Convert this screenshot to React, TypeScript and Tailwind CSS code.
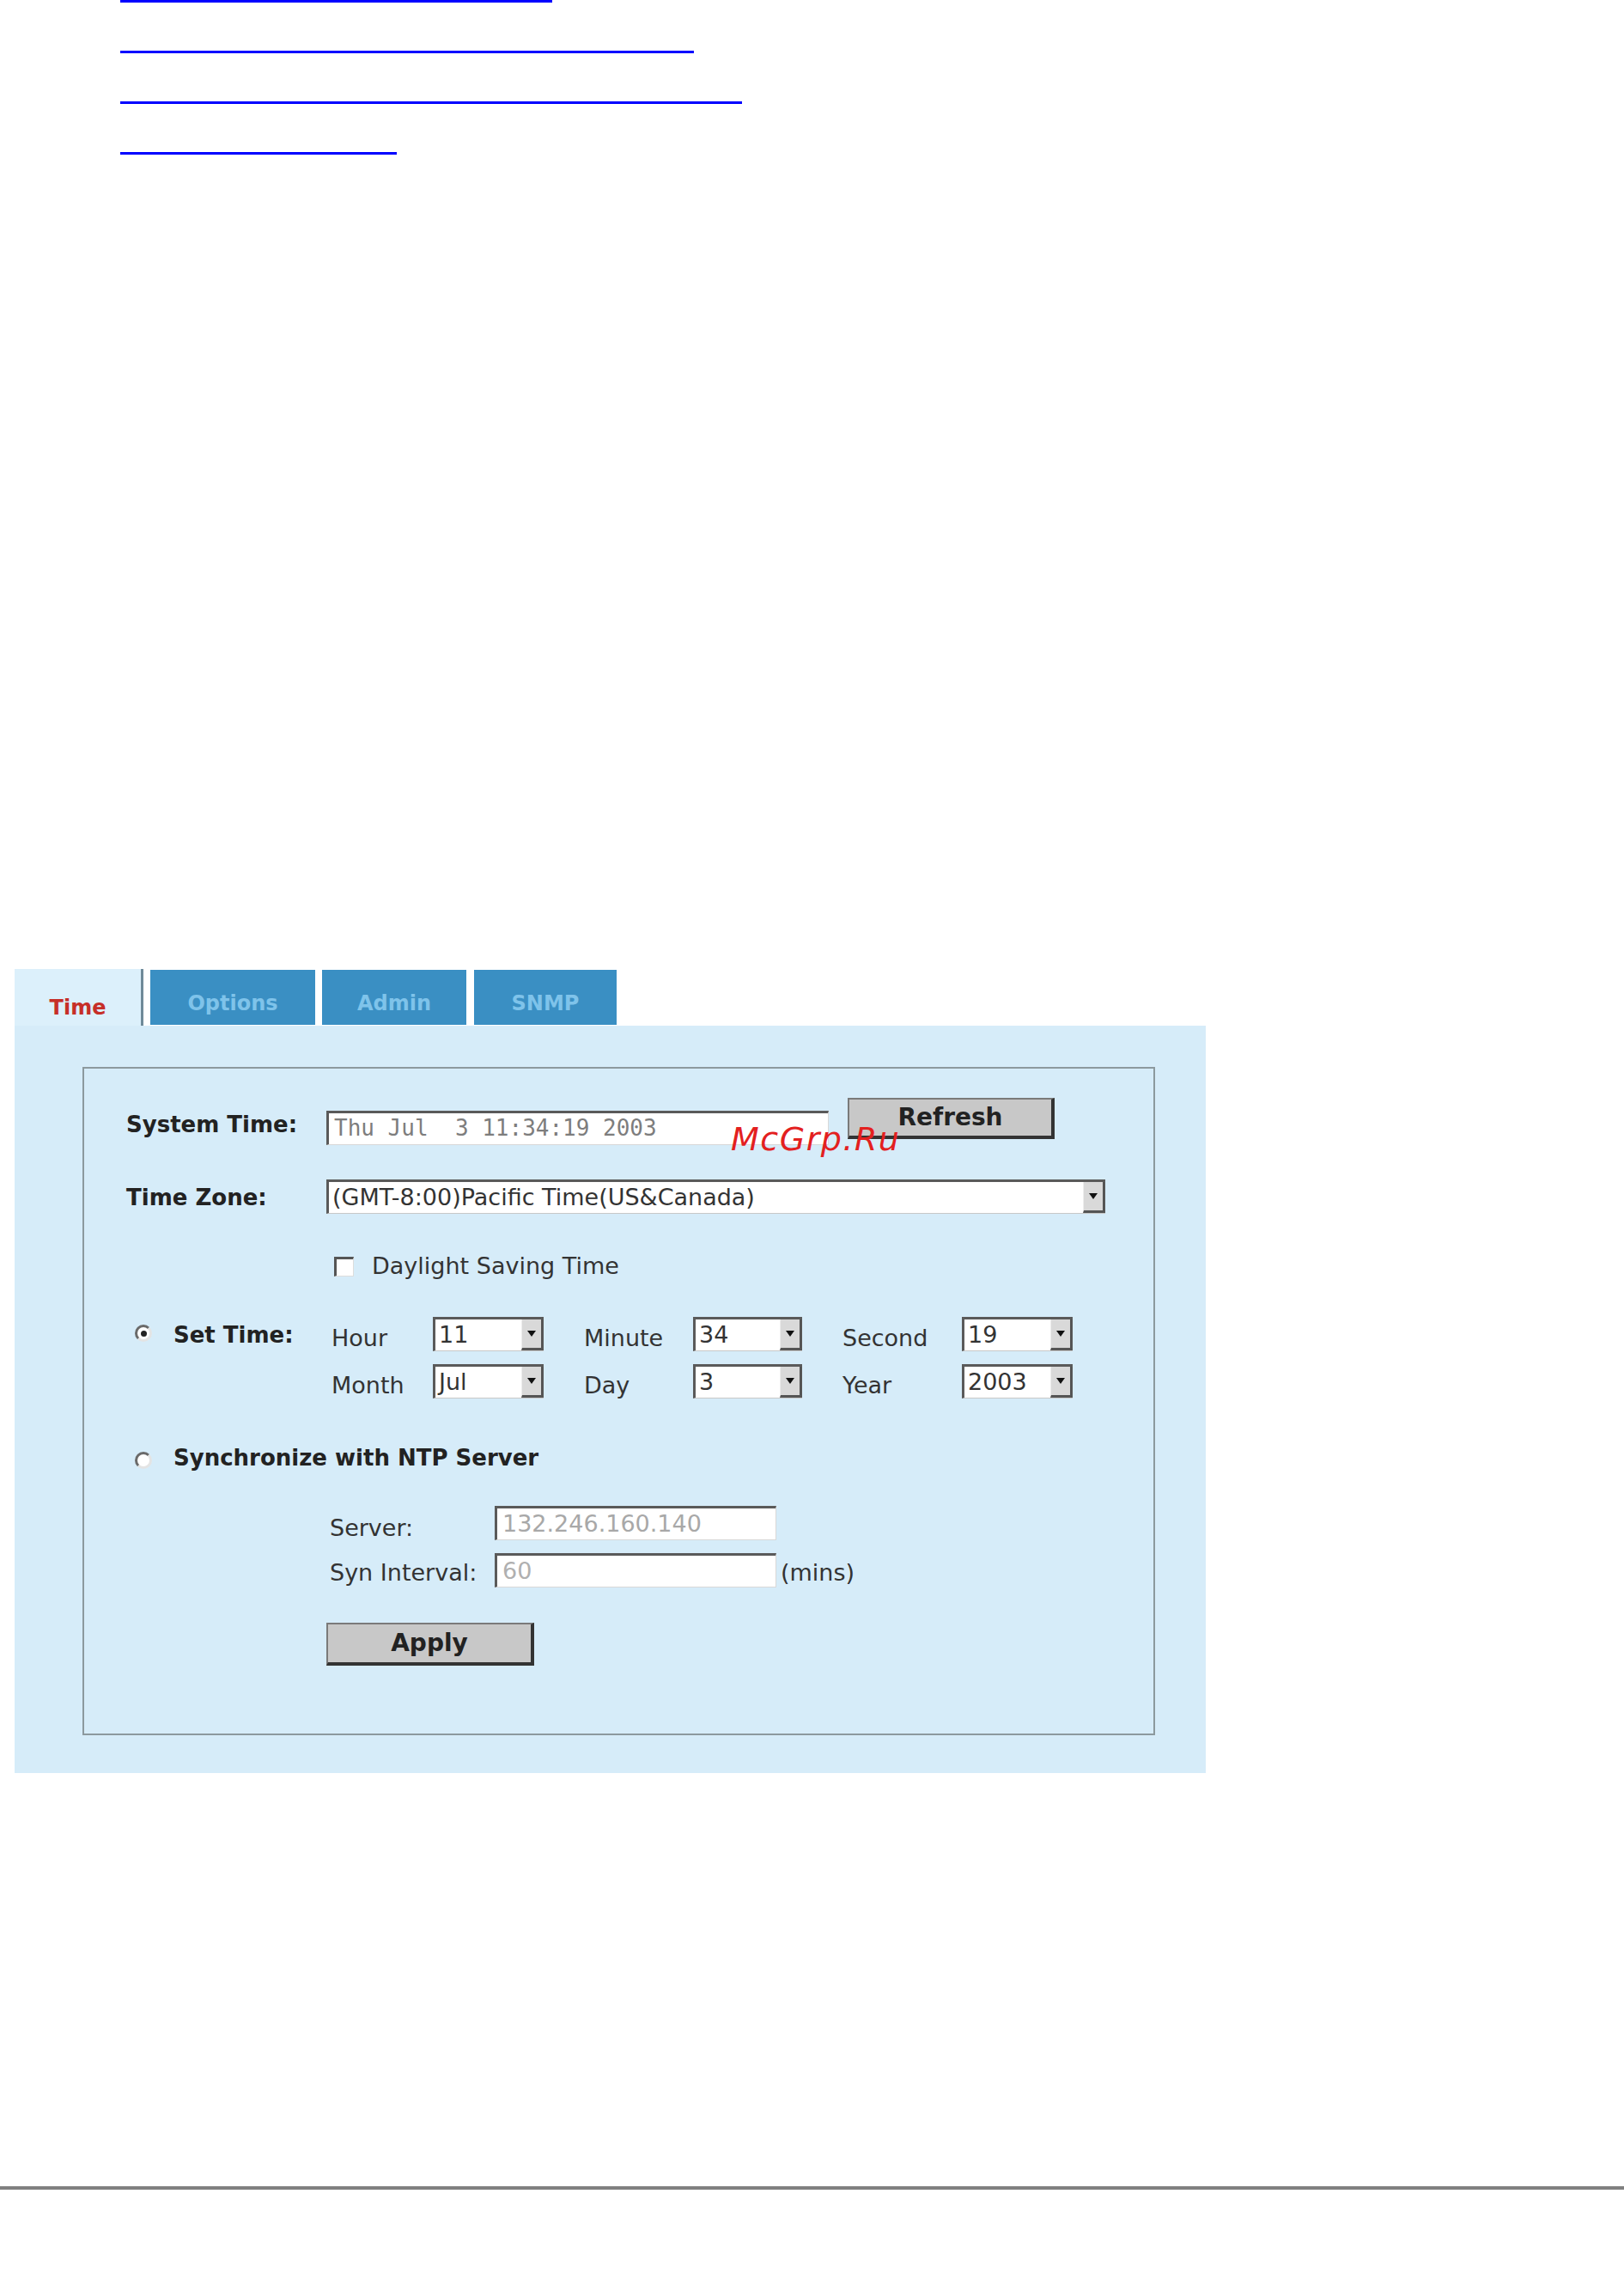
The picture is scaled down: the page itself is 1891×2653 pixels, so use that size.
import React from "react";

const Select = ({ value, w }: { value: string; w: string }) => (
  <div className={`${w} h-[40px] flex bg-white border-t-[3px] border-l-[3px] border-[#5a5a5a] border-b border-b-[#c8c8c8]`}>
    <div className="flex-1 pl-[4px] text-[27px] leading-[35px] text-[#333] whitespace-pre overflow-hidden">{value}</div>
    <div className="w-[26px] h-full bg-[#d9d9d9] border-r-[3px] border-b-[3px] border-[#555] border-l border-l-[#eee] flex items-center justify-center">
      <svg width="10" height="7" viewBox="0 0 10 7"><path d="M0 0 L10 0 L5 7 Z" fill="#111" /></svg>
    </div>
  </div>
);

const TextBox = ({ value, w, color, mono }: { value: string; w: string; color: string; mono?: boolean }) => (
  <div className={`${w} h-[40px] bg-white border-t-[3px] border-l-[3px] border-[#5a5a5a] border-b border-r border-b-[#d8d8d8] border-r-[#d8d8d8]`}>
    <div className={`pl-[6px] whitespace-pre leading-[35px] ${mono ? "font-['DejaVu_Sans_Mono'] text-[26px]" : "text-[27px]"} ${color}`}>{value}</div>
  </div>
);

const Button = ({ label, w, h }: { label: string; w: string; h: string }) => (
  <div className={`${w} ${h} bg-[#c8c8c8] border-t-2 border-l-2 border-[#7a7a7a] border-r-[4px] border-b-[4px] border-r-[#333] border-b-[#333] flex items-center justify-center font-bold text-[28px] text-[#222]`}>
    {label}
  </div>
);

const Radio = ({ on }: { on: boolean }) => (
  <div className="w-[20px] h-[20px] rounded-full bg-white border-[3px] border-[#6a6a6a] border-r-[#e4e4e4] border-b-[#e4e4e4] flex items-center justify-center">
    {on && <div className="w-[7px] h-[7px] rounded-full bg-[#222]" />}
  </div>
);

export default function App() {
  return (
    <div className="relative w-[1891px] h-[2653px] bg-white font-['DejaVu_Sans',sans-serif] text-[#333] overflow-hidden">
      {/* links */}
      <div className="pl-[140px] flex flex-col gap-[56px]">
        <a href="#" aria-label="link" className="block h-[3px] w-[503px] bg-[#0000ff]" />
        <a href="#" aria-label="link" className="block h-[3px] w-[668px] bg-[#0000ff]" />
        <a href="#" aria-label="link" className="block h-[3px] w-[724px] bg-[#0000ff]" />
        <a href="#" aria-label="link" className="block h-[3px] w-[322px] bg-[#0000ff]" />
      </div>

      {/* panel */}
      <div className="ml-[17px] mt-[942px] w-[1387px]">
        {/* tabs */}
        <div className="flex items-end h-[72px]">
          <div className="w-[150px] h-[66px] bg-[#dcf0fb] border-r-[3px] border-[#6f8a99] text-center pt-[31px] text-[24px] leading-[28px] font-bold text-[#c62f28]">
            Time
          </div>
          <div className="ml-[8px] w-[192px] h-[64px] mb-[1px] bg-[#3a8fc3] text-center pt-[25px] text-[24px] leading-[28px] font-bold text-[#7fc3ea]">
            Options
          </div>
          <div className="ml-[8px] w-[168px] h-[64px] mb-[1px] bg-[#3a8fc3] text-center pt-[25px] text-[24px] leading-[28px] font-bold text-[#7fc3ea]">
            Admin
          </div>
          <div className="ml-[9px] w-[166px] h-[64px] mb-[1px] bg-[#3a8fc3] text-center pt-[25px] text-[24px] leading-[28px] font-bold text-[#7fc3ea]">
            SNMP
          </div>
        </div>

        {/* body */}
        <div className="h-[870px] bg-[#d6ecf9] pt-[48px]">
          <div className="ml-[79px] w-[1249px] h-[778px] border-2 border-[#8c999e] pl-[49px] pt-[34px]">
            {/* System Time */}
            <div className="flex items-start">
              <div className="w-[233px] mt-[16px] text-[26px] leading-[30px] font-bold text-[#222]">System Time:</div>
              <div className="mt-[15px]">
                <TextBox value="Thu Jul  3 11:34:19 2003" w="w-[585px]" color="text-[#7d7d7d]" mono />
              </div>
              <div className="ml-[22px]">
                <Button label="Refresh" w="w-[241px]" h="h-[48px]" />
              </div>
            </div>

            {/* Time Zone */}
            <div className="flex items-start mt-[40px]">
              <div className="w-[233px] mt-[6px] text-[26px] leading-[30px] font-bold text-[#222]">Time Zone:</div>
              <Select value="(GMT-8:00)Pacific Time(US&Canada)" w="w-[907px]" />
            </div>

            {/* Daylight */}
            <div className="flex items-start mt-[45px] pl-[242px]">
              <div className="mt-[5px] w-[23px] h-[23px] bg-white border-t-[3px] border-l-[3px] border-[#555] border-b border-r border-b-[#ddd] border-r-[#ddd]" />
              <div className="ml-[21px] text-[27px] leading-[31px]">Daylight Saving Time</div>
            </div>

            {/* Set Time */}
            <div className="flex items-start mt-[44px]">
              <div className="w-[239px] flex items-start">
                <div className="ml-[10px] mt-[9px]"><Radio on /></div>
                <div className="ml-[25px] mt-[6px] text-[26px] leading-[30px] font-bold text-[#222]">Set Time:</div>
              </div>
              <div className="flex flex-col gap-[15px]">
                <div className="flex items-start">
                  <div className="w-[118px] mt-[9px] text-[27px] leading-[31px]">Hour</div>
                  <Select value="11" w="w-[129px]" />
                  <div className="ml-[47px] w-[127px] mt-[9px] text-[27px] leading-[31px]">Minute</div>
                  <Select value="34" w="w-[127px]" />
                  <div className="ml-[47px] w-[139px] mt-[9px] text-[27px] leading-[31px]">Second</div>
                  <Select value="19" w="w-[129px]" />
                </div>
                <div className="flex items-start">
                  <div className="w-[118px] mt-[9px] text-[27px] leading-[31px]">Month</div>
                  <Select value="Jul" w="w-[129px]" />
                  <div className="ml-[47px] w-[127px] mt-[9px] text-[27px] leading-[31px]">Day</div>
                  <Select value="3" w="w-[127px]" />
                  <div className="ml-[47px] w-[139px] mt-[9px] text-[27px] leading-[31px]">Year</div>
                  <Select value="2003" w="w-[129px]" />
                </div>
              </div>
            </div>

            {/* Sync */}
            <div className="flex items-start mt-[54px]">
              <div className="ml-[10px] mt-[8px]"><Radio on={false} /></div>
              <div className="ml-[25px] text-[26px] leading-[30px] font-bold text-[#222]">Synchronize with NTP Server</div>
            </div>

            {/* Server */}
            <div className="flex items-start mt-[41px] pl-[237px]">
              <div className="w-[192px] mt-[10px] text-[27px] leading-[31px]">Server:</div>
              <TextBox value="132.246.160.140" w="w-[328px]" color="text-[#a8a8a8]" />
            </div>
            <div className="flex items-start mt-[14px] pl-[237px]">
              <div className="w-[192px] mt-[7px] text-[27px] leading-[31px]">Syn Interval:</div>
              <TextBox value="60" w="w-[328px]" color="text-[#b0b0b0]" />
              <div className="ml-[5px] mt-[7px] text-[27px] leading-[31px]">(mins)</div>
            </div>

            {/* Apply */}
            <div className="mt-[41px] pl-[233px]">
              <Button label="Apply" w="w-[242px]" h="h-[50px]" />
            </div>
          </div>
        </div>
      </div>

      {/* bottom rule */}
      <div className="mt-[481px] h-[4px] bg-[#808080]" />

      {/* watermark */}
      <div className="absolute left-[851px] top-[1304px] text-[38px] leading-[45px] italic tracking-[1.5px] text-[#e3201f] font-['DejaVu_Sans',sans-serif]">
        McGrp.Ru
      </div>
    </div>
  );
}
